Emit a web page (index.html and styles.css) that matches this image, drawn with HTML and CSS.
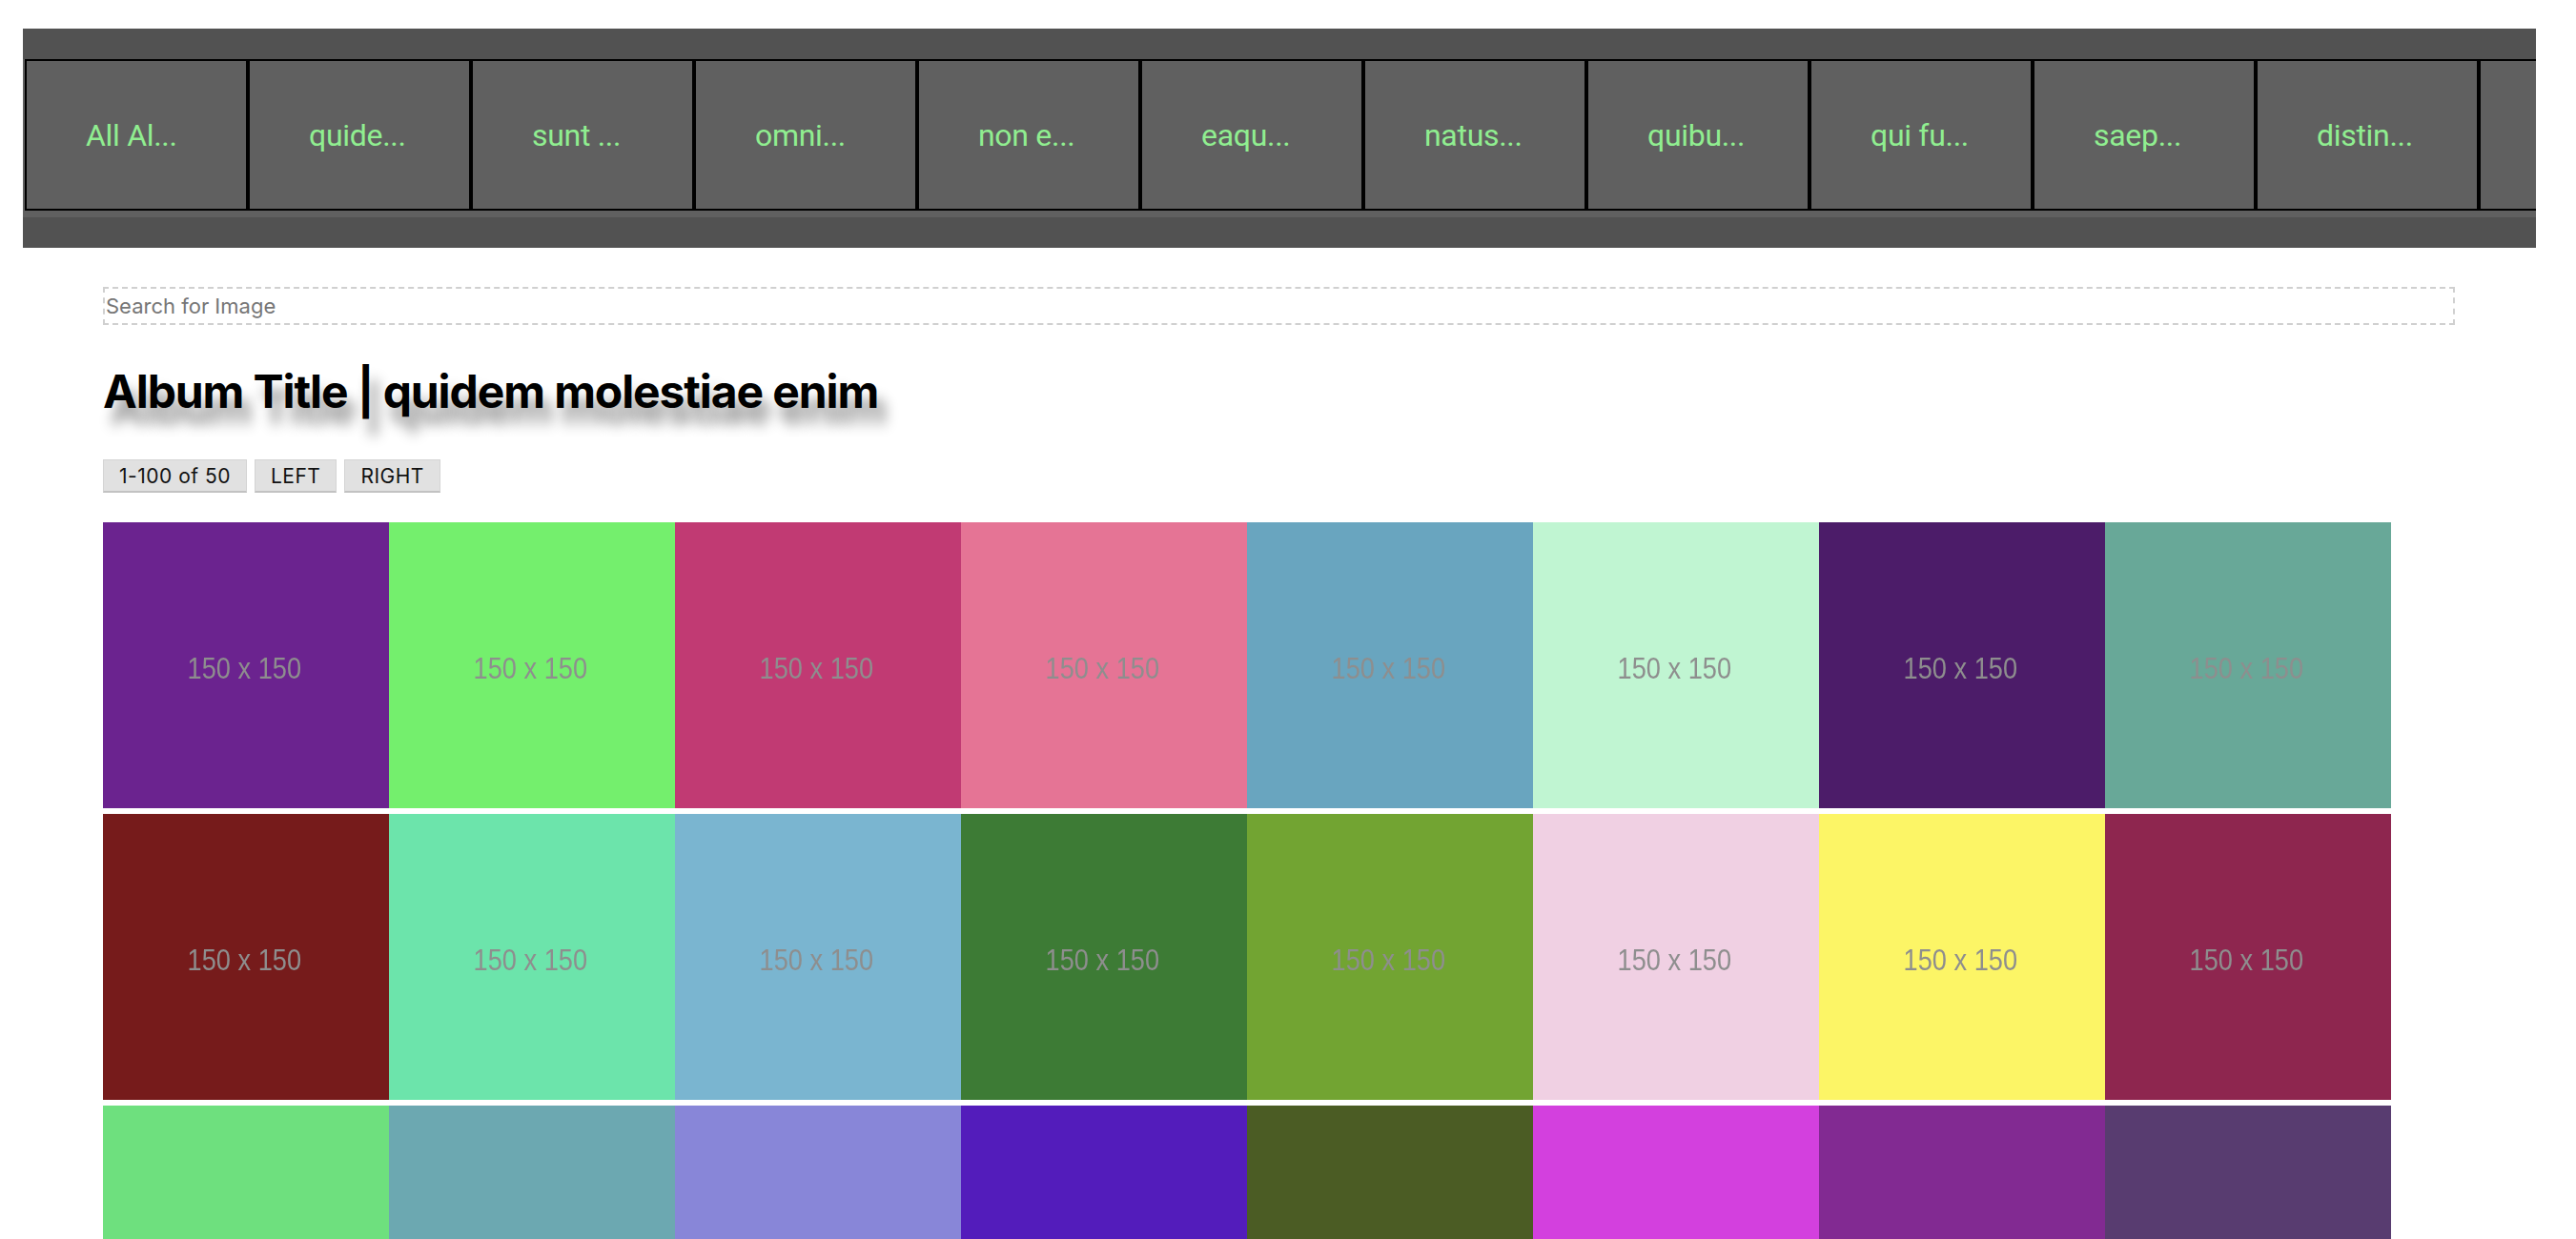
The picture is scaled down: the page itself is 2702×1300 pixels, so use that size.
FILE: index.html
```html
<!DOCTYPE html>
<html lang="en">
<head>
<meta charset="utf-8">
<title>Album</title>
<link rel="stylesheet" href="styles.css">
</head>
<body>
<div class="page">
  <nav class="albums">
    <div class="album-strip">
      <div class="album-item">All Al...</div>
      <div class="album-item">quide...</div>
      <div class="album-item">sunt ...</div>
      <div class="album-item">omni...</div>
      <div class="album-item">non e...</div>
      <div class="album-item">eaqu...</div>
      <div class="album-item">natus...</div>
      <div class="album-item">quibu...</div>
      <div class="album-item">qui fu...</div>
      <div class="album-item">saep...</div>
      <div class="album-item">distin...</div>
      <div class="album-item">quam ...</div>
    </div>
  </nav>
  <main class="content">
    <input class="search" type="text" placeholder="Search for Image">
    <h1 class="album-title">Album Title | quidem molestiae enim</h1>
    <div class="pager">
      <button class="pager-btn">1-100 of 50</button>
      <button class="pager-btn">LEFT</button>
      <button class="pager-btn">RIGHT</button>
    </div>
    <div class="grid">
      <div class="tile" style="background:#6b238f"><span class="tile-label">150 x 150</span></div>
      <div class="tile" style="background:#74ef6d"><span class="tile-label">150 x 150</span></div>
      <div class="tile" style="background:#c13a73"><span class="tile-label">150 x 150</span></div>
      <div class="tile" style="background:#e57495"><span class="tile-label">150 x 150</span></div>
      <div class="tile" style="background:#69a5bf"><span class="tile-label">150 x 150</span></div>
      <div class="tile" style="background:#c0f5d2"><span class="tile-label">150 x 150</span></div>
      <div class="tile" style="background:#4c1c69"><span class="tile-label">150 x 150</span></div>
      <div class="tile" style="background:#68a898"><span class="tile-label">150 x 150</span></div>
      <div class="tile" style="background:#761b1b"><span class="tile-label">150 x 150</span></div>
      <div class="tile" style="background:#6ce4ab"><span class="tile-label">150 x 150</span></div>
      <div class="tile" style="background:#7ab5d0"><span class="tile-label">150 x 150</span></div>
      <div class="tile" style="background:#3d7b35"><span class="tile-label">150 x 150</span></div>
      <div class="tile" style="background:#72a432"><span class="tile-label">150 x 150</span></div>
      <div class="tile" style="background:#f0d0e3"><span class="tile-label">150 x 150</span></div>
      <div class="tile" style="background:#fcf566"><span class="tile-label">150 x 150</span></div>
      <div class="tile" style="background:#8e264f"><span class="tile-label">150 x 150</span></div>
      <div class="tile" style="background:#6ee07e"><span class="tile-label">150 x 150</span></div>
      <div class="tile" style="background:#6ca8b1"><span class="tile-label">150 x 150</span></div>
      <div class="tile" style="background:#8886d8"><span class="tile-label">150 x 150</span></div>
      <div class="tile" style="background:#531cbb"><span class="tile-label">150 x 150</span></div>
      <div class="tile" style="background:#4b5c24"><span class="tile-label">150 x 150</span></div>
      <div class="tile" style="background:#d340de"><span class="tile-label">150 x 150</span></div>
      <div class="tile" style="background:#822a92"><span class="tile-label">150 x 150</span></div>
      <div class="tile" style="background:#583c70"><span class="tile-label">150 x 150</span></div>
    </div>
  </main>
</div>
</body>
</html>
```
FILE: styles.css
```css
html {
  overflow: hidden;
  scrollbar-width: none;
}

body {
  margin: 0;
  background: #ffffff;
  font-family: Inter, "Noto Sans", sans-serif;
  color: #000000;
}

.page {
  width: 2636px;
  padding: 30px 0 0 24px;
}

/* ---------- album navigation ---------- */
.albums {
  background: #525252;
  padding: 32px 0;
  overflow: hidden;
}

.album-strip {
  display: flex;
  background: #606060;
  padding: 0 0 7px 2px;
}

.album-item {
  flex: 0 0 auto;
  box-sizing: content-box;
  width: 106px;
  height: 155px;
  padding: 0 62px;
  border: 2px solid #000000;
  background: #606060;
  color: #90ee90;
  font-family: Roboto, "Noto Sans", sans-serif;
  font-size: 32px;
  letter-spacing: -0.3px;
  display: flex;
  align-items: center;
  justify-content: flex-start;
  white-space: nowrap;
  overflow: hidden;
}

/* ---------- content ---------- */
.content {
  padding: 0 85px 0 84px;
}

.search {
  display: block;
  box-sizing: border-box;
  width: 100%;
  height: 40px;
  margin: 41px 0 0;
  padding: 0 1px;
  border: 2px dashed #d0d0d0;
  outline: none;
  font-family: Inter, "Noto Sans", sans-serif;
  font-size: 22px;
  color: #222;
  background: #fff;
}

.search::placeholder {
  color: #767676;
}

.album-title {
  margin: 41px 0 0;
  font-family: Inter, "Noto Sans", sans-serif;
  font-weight: 700;
  font-size: 48px;
  line-height: 58px;
  letter-spacing: -1.1px;
  text-shadow: 8px 17px 14px rgba(0, 0, 0, 0.45);
}

.pager {
  display: flex;
  gap: 8px;
  margin-top: 42px;
}

.pager-btn {
  height: 35px;
  padding: 0 16px;
  background: #e1e1e1;
  border: 1px solid #d4d4d4;
  border-bottom: 2px solid #c2c2c2;
  border-radius: 0;
  font-family: Inter, "Noto Sans", sans-serif;
  font-size: 21px;
  letter-spacing: 0.5px;
  color: #111;
}

.grid {
  display: flex;
  flex-wrap: wrap;
  row-gap: 6px;
  margin-top: 31px;
}

.tile {
  width: 300px;
  height: 300px;
  display: flex;
  align-items: center;
  justify-content: center;
}

.tile-label {
  display: inline-block;
  margin-top: 6px;
  margin-right: 4px;
  font-family: "Liberation Sans", Arial, sans-serif;
  font-size: 32px;
  color: #8e8e8e;
  transform: scaleX(0.85);
  filter: blur(0.4px);
}
```
